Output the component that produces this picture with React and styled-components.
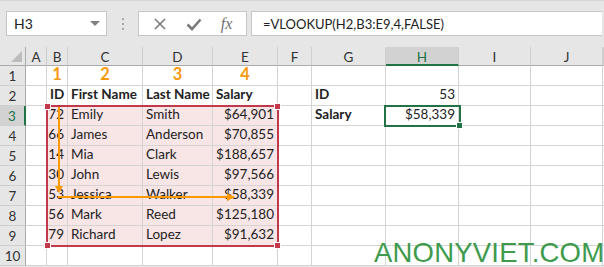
import React from 'react'
import styled, {createGlobalStyle} from 'styled-components'

const GlobalStyle = createGlobalStyle`
    body{
        margin:0;
        background:#ffffff;
        font-family:Lato, "Open Sans", sans-serif;
    }
`;

const Page = styled.div`
    width:604px;
    height:267px;
    overflow:hidden;
    background:#e6e6e6;
`;

const Toolbar = styled.div`
    height:47px;
    box-sizing:border-box;
    padding:10px 0 0 6px;
    display:flex;
    align-items:flex-start;
    border-top:1px solid #d6d6d6;
`;
const NameBox = styled.div`
    width:101px;
    height:25px;
    box-sizing:border-box;
    background:#fff;
    border:1px solid #c6c6c6;
    display:flex;
    align-items:center;
    justify-content:space-between;
    padding:0 6px 0 7px;
    font-size:14px;
    color:#222;
`;
const Caret = styled.span`
    width:0;
    height:0;
    border-left:5px solid transparent;
    border-right:5px solid transparent;
    border-top:5px solid #808080;
`;
const Grip = styled.div`
    width:31px;
    height:25px;
    display:flex;
    flex-direction:column;
    align-items:center;
    justify-content:center;
    gap:3px;
    & span{
        width:2px;
        height:2px;
        background:#a8a8a8;
    }
`;
const FxBox = styled.div`
    width:109px;
    height:25px;
    box-sizing:border-box;
    background:#fff;
    border:1px solid #c6c6c6;
    display:flex;
    align-items:center;
    justify-content:space-around;
    padding:0 4px;
    margin-right:4px;
    color:#7a7a7a;
`;
const Fx = styled.span`
    font-family:"Liberation Serif", serif;
    font-style:italic;
    font-size:16px;
    color:#707070;
`;
const Formula = styled.div`
    width:351px;
    height:25px;
    box-sizing:border-box;
    background:#fff;
    border:1px solid #c6c6c6;
    border-right:none;
    display:flex;
    align-items:center;
    padding-left:11px;
    font-size:13px;
    color:#222;
`;

const Sheet = styled.div`
    position:relative;
    display:grid;
    grid-template-columns:26px 21px 21px 75px 70px 65px 34px 74px 73px 72px 72px 1px;
    grid-template-rows:19px repeat(10, 20px);
    background:#fff;
`;
const Corner = styled.div`
    background:#e6e6e6;
    border-right:1px solid #ababab;
    border-bottom:1px solid #ababab;
    position:relative;
    &::after{
        content:'';
        position:absolute;
        right:3px;
        bottom:3px;
        border-left:11px solid transparent;
        border-bottom:11px solid #bdbdbd;
    }
`;
const ColHead = styled.div`
    background:${p => p.$sel ? '#d2d2d2' : '#e6e6e6'};
    border-right:1px solid #cfcfcf;
    border-bottom:${p => p.$sel ? '2px solid #217346' : '1px solid #ababab'};
    display:flex;
    align-items:center;
    justify-content:center;
    font-size:13.5px;
    color:${p => p.$sel ? '#217346' : '#333'};
    padding-top:2px;
    box-sizing:border-box;
`;
const RowHead = styled.div`
    background:${p => p.$sel ? '#d2d2d2' : '#e6e6e6'};
    border-right:${p => p.$sel ? '2px solid #217346' : '1px solid #ababab'};
    border-bottom:1px solid #cfcfcf;
    display:flex;
    align-items:center;
    justify-content:center;
    font-size:13.5px;
    color:${p => p.$sel ? '#217346' : '#333'};
    box-sizing:border-box;
`;
const Cell = styled.div`
    background:${p => p.$fill ? '#f8e5e6' : '#fff'};
    border-right:1px solid #d4d4d4;
    border-bottom:1px solid #d4d4d4;
    display:flex;
    align-items:flex-end;
    justify-content:${p => p.$align === 'right' ? 'flex-end' : p.$align === 'center' ? 'center' : 'flex-start'};
    padding:0 3px 2px 3px;
    font-size:${p => p.$num ? '16.5px' : '13.5px'};
    font-weight:${p => p.$bold ? 700 : 400};
    color:${p => p.$num ? '#f79a0f' : '#222'};
    white-space:nowrap;
    overflow:visible;
    box-sizing:border-box;
    line-height:17px;
`;

const Range = styled.div`
    position:absolute;
    left:46px;
    top:58px;
    width:233px;
    height:142px;
    box-sizing:border-box;
    border:2px solid #c1394a;
    pointer-events:none;
`;
const Handle = styled.span`
    position:absolute;
    width:5px;
    height:5px;
    background:${p => p.$color};
    border:1px solid #fff;
    ${p => p.$top ? 'top:-4px;' : 'bottom:-4px;'}
    ${p => p.$left ? 'left:-4px;' : 'right:-4px;'}
`;
const Selection = styled.div`
    position:absolute;
    left:384px;
    top:58px;
    width:77px;
    height:22px;
    box-sizing:border-box;
    border:2px solid #217346;
`;
const Arrows = styled.svg`
    position:absolute;
    left:0;
    top:0;
    pointer-events:none;
`;
const Watermark = styled.div`
    position:absolute;
    left:374px;
    top:194px;
    font-family:"Liberation Sans", sans-serif;
    font-size:27.5px;
    line-height:24px;
    color:#3e9b4e;
    letter-spacing:0.2px;
`;

const cols = ['A','B','C','D','E','F','G','H','I','J']

const data = [
    ['72','Emily','Smith','$64,901'],
    ['66','James','Anderson','$70,855'],
    ['14','Mia','Clark','$188,657'],
    ['30','John','Lewis','$97,566'],
    ['53','Jessica','Walker','$58,339'],
    ['56','Mark','Reed','$125,180'],
    ['79','Richard','Lopez','$91,632'],
]

function rowCells(r) {
    // returns 10 cells for columns A..J
    const cells = Array.from({length:10}, () => ({text:''}))
    if (r === 1) {
        ['1','2','3','4'].forEach((t, i) => { cells[i+1] = {text:t, align:'center', bold:true, num:true} })
    } else if (r === 2) {
        cells[1] = {text:'ID', bold:true}
        cells[2] = {text:'First Name', bold:true}
        cells[3] = {text:'Last Name', bold:true}
        cells[4] = {text:'Salary', bold:true}
        cells[6] = {text:'ID', bold:true}
        cells[7] = {text:'53', align:'right'}
    } else if (r >= 3 && r <= 9) {
        const d = data[r-3]
        cells[1] = {text:d[0], align:'right', fill:true}
        cells[2] = {text:d[1], fill:true}
        cells[3] = {text:d[2], fill:true}
        cells[4] = {text:d[3], align:'right', fill:true}
        if (r === 3) {
            cells[6] = {text:'Salary', bold:true}
            cells[7] = {text:'$58,339', align:'right'}
        }
    }
    return cells
}

function App() {
    const rows = Array.from({length:10}, (_, i) => i + 1)
    return(
        <Page>
            <GlobalStyle/>
            <Toolbar>
                <NameBox>H3<Caret/></NameBox>
                <Grip><span/><span/><span/></Grip>
                <FxBox>
                    <svg width="14" height="14" viewBox="0 0 14 14">
                        <path d="M2 2 L12 12 M12 2 L2 12" stroke="#7a7a7a" strokeWidth="1.6" fill="none"/>
                    </svg>
                    <svg width="16" height="14" viewBox="0 0 16 14">
                        <path d="M1.5 7.5 L6 12 L14.5 2.5" stroke="#7a7a7a" strokeWidth="2.6" fill="none"/>
                    </svg>
                    <Fx>fx</Fx>
                </FxBox>
                <Formula>=VLOOKUP(H2,B3:E9,4,FALSE)</Formula>
            </Toolbar>
            <Sheet>
                <Corner/>
                {cols.map(c => <ColHead key={c} $sel={c === 'H'}>{c}</ColHead>)}
                <ColHead/>
                {rows.map(r => (
                    <React.Fragment key={r}>
                        <RowHead $sel={r === 3}>{r}</RowHead>
                        {rowCells(r).map((c, i) => (
                            <Cell key={i} $align={c.align} $bold={c.bold} $num={c.num} $fill={c.fill}>{c.text}</Cell>
                        ))}
                        <Cell/>
                    </React.Fragment>
                ))}
                <Range>
                    <Handle $color="#c1394a" $top $left/>
                    <Handle $color="#c1394a" $top/>
                    <Handle $color="#c1394a" $left/>
                    <Handle $color="#c1394a"/>
                </Range>
                <Selection>
                    <Handle $color="#217346"/>
                </Selection>
                <Arrows width="604" height="220" viewBox="0 0 604 220">
                    <line x1="59" y1="60" x2="59" y2="141" stroke="#f90" strokeWidth="2"/>
                    <polygon points="55,139 63,139 59,146" fill="#f90"/>
                    <line x1="58" y1="150" x2="229" y2="150" stroke="#f90" strokeWidth="2"/>
                    <polygon points="227,146 227,154 235,150" fill="#f90"/>
                </Arrows>
                <Watermark>ANONYVIET.COM</Watermark>
            </Sheet>
        </Page>
    );
}
export default App
